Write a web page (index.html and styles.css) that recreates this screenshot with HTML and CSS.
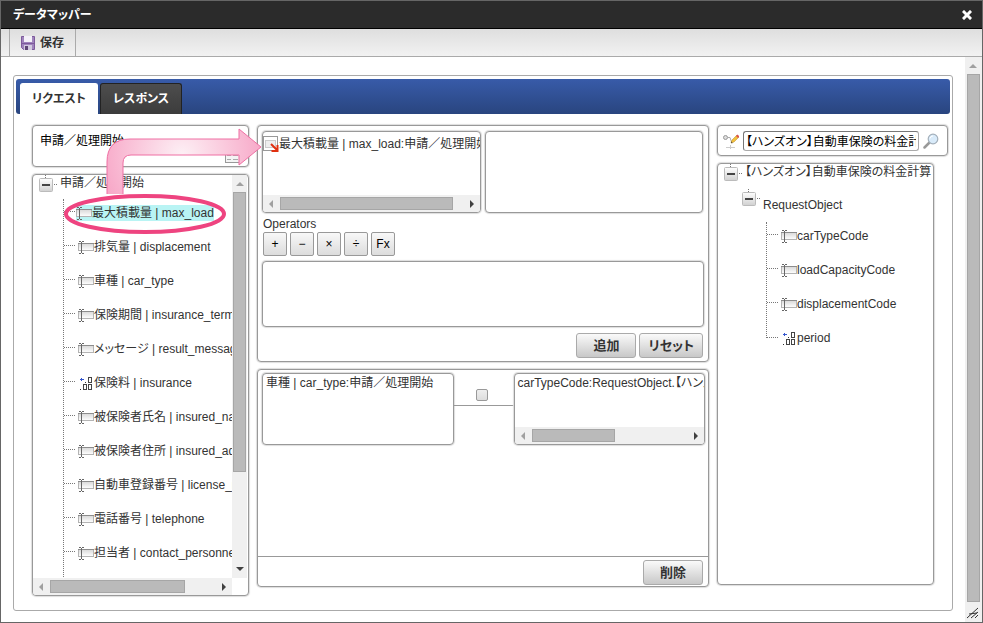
FILE: index.html
```html
<!DOCTYPE html>
<html lang="ja">
<head>
    <meta charset="UTF-8">
    <meta name="viewport" content="width=device-width, initial-scale=1.0">
    <title>データマッパー</title>
    <link rel="stylesheet" href="styles.css">
</head>
<body>
    <!-- Shared icons -->
    <svg class="sprite" aria-hidden="true">
        <defs>
            <linearGradient id="field-fill" x1="0" y1="0" x2="0" y2="1">
                <stop offset="0" stop-color="#d8d8d8"/>
                <stop offset="1" stop-color="#ffffff"/>
            </linearGradient>
            <linearGradient id="minus-fill" x1="0" y1="0" x2="0" y2="1">
                <stop offset="0" stop-color="#ffffff"/>
                <stop offset="1" stop-color="#d0d0d0"/>
            </linearGradient>
        </defs>
        <symbol id="icon-field" viewBox="0 0 16 16">
            <rect x="0.5" y="4.5" width="15" height="7" fill="url(#field-fill)" stroke="#b4b4b4"/>
            <path d="M0 4.5h16" stroke="#8c8c8c"/>
            <path d="M3.5 3v11M1 2.5h2M4 2.5h2M1 14.5h2M4 14.5h2" stroke="#666" fill="none"/>
        </symbol>
        <symbol id="icon-number" viewBox="0 0 16 16">
            <path d="M2 4.5h4M3.5 3v3" stroke="#3355cc" fill="none"/>
            <path d="M7 7h1v1H7zM2 14h1v1H2z" fill="#333"/>
            <rect x="10.5" y="2.5" width="3" height="5" fill="none" stroke="#444"/>
            <rect x="5.5" y="9.5" width="3" height="5" fill="none" stroke="#444"/>
            <rect x="10.5" y="9.5" width="3" height="5" fill="none" stroke="#444"/>
        </symbol>
        <symbol id="icon-minus" viewBox="0 0 20 18">
            <path d="M7.5 0v3M16 9.5h4" stroke="#777" stroke-dasharray="1 1"/>
            <rect x="1.5" y="3.5" width="13" height="13" rx="1" fill="url(#minus-fill)" stroke="#bbb"/>
            <path d="M4 10h8" stroke="#444" stroke-width="2"/>
        </symbol>
        <symbol id="icon-left" viewBox="0 0 8 8"><path d="M6 0v8L2 4z" fill="#a0a0a0"/></symbol>
        <symbol id="icon-right" viewBox="0 0 8 8"><path d="M2 0v8l4-4z" fill="#404040"/></symbol>
        <symbol id="icon-up" viewBox="0 0 8 8"><path d="M0 6h8L4 2z" fill="#a0a0a0"/></symbol>
        <symbol id="icon-down" viewBox="0 0 8 8"><path d="M0 2h8L4 6z" fill="#404040"/></symbol>
    </svg>

    <div class="dialog">
        <div class="title-bar">
            <h1>データマッパー</h1>
            <button class="close-button" aria-label="閉じる">
                <svg width="10" height="10" viewBox="0 0 10 10"><path d="M2 2l6 6M8 2l-6 6" stroke="#fff" stroke-width="3" stroke-linecap="square"/></svg>
            </button>
        </div>

        <div class="toolbar">
            <button class="save-button">
                <svg width="16" height="16" viewBox="0 0 16 16">
                    <path d="M1.5 1.5h13v13h-11l-2-2z" fill="#a084bd" stroke="#7d5a9b"/>
                    <rect x="4" y="1" width="8" height="6" fill="#f4f1f8"/>
                    <path d="M2 8.5h12" stroke="#7d5a9b"/>
                    <rect x="4" y="10" width="8" height="5" fill="#d3cbe0"/>
                    <rect x="5" y="11" width="3" height="4" fill="#5e4676"/>
                </svg>
                保存
            </button>
        </div>

        <div class="content">
            <div class="page">
                <div class="mapper">
                    <div class="tabs">
                        <button class="tab active">リクエスト</button>
                        <button class="tab">レスポンス</button>
                    </div>

                    <div class="columns">
                        <!-- Source side -->
                        <div class="column source">
                            <div class="panel source-name">
                                <span>申請／処理開始</span>
                                <svg class="form-icon" width="15" height="12" viewBox="0 0 15 12">
                                    <rect x="0.5" y="0.5" width="14" height="11" fill="#f4f4f4" stroke="#999"/>
                                    <path d="M2 4.5h4M2 8.5h4M8 4.5h5M8 8.5h5" stroke="#aaa"/>
                                </svg>
                            </div>

                            <div class="panel source-tree">
                                <div class="tree-view">
                                    <div class="tree-root">
                                        <svg width="20" height="18"><use href="#icon-minus"/></svg>
                                        <span>申請／処理開始</span>
                                    </div>
                                    <ul class="tree-items">
                                        <li><span class="node selected"><svg width="16" height="16"><use href="#icon-field"/></svg>最大積載量 | max_load</span></li>
                                        <li><span class="node"><svg width="16" height="16"><use href="#icon-field"/></svg>排気量 | displacement</span></li>
                                        <li><span class="node"><svg width="16" height="16"><use href="#icon-field"/></svg>車種 | car_type</span></li>
                                        <li><span class="node"><svg width="16" height="16"><use href="#icon-field"/></svg>保険期間 | insurance_term</span></li>
                                        <li><span class="node"><svg width="16" height="16"><use href="#icon-field"/></svg>メッセージ | result_message</span></li>
                                        <li><span class="node"><svg width="16" height="16"><use href="#icon-number"/></svg>保険料 | insurance</span></li>
                                        <li><span class="node"><svg width="16" height="16"><use href="#icon-field"/></svg>被保険者氏名 | insured_name</span></li>
                                        <li><span class="node"><svg width="16" height="16"><use href="#icon-field"/></svg>被保険者住所 | insured_address</span></li>
                                        <li><span class="node"><svg width="16" height="16"><use href="#icon-field"/></svg>自動車登録番号 | license_number</span></li>
                                        <li><span class="node"><svg width="16" height="16"><use href="#icon-field"/></svg>電話番号 | telephone</span></li>
                                        <li><span class="node"><svg width="16" height="16"><use href="#icon-field"/></svg>担当者 | contact_personnel</span></li>
                                        <li></li>
                                    </ul>
                                </div>
                                <div class="scroll-v">
                                    <svg width="8" height="8"><use href="#icon-up"/></svg>
                                    <div class="track"><div class="thumb tree-thumb"></div></div>
                                    <svg width="8" height="8"><use href="#icon-down"/></svg>
                                </div>
                                <div class="scroll-h">
                                    <svg width="8" height="8"><use href="#icon-left"/></svg>
                                    <div class="track"><div class="thumb wide-thumb"></div></div>
                                    <svg width="8" height="8"><use href="#icon-right"/></svg>
                                </div>
                            </div>
                        </div>

                        <!-- Mapping editor -->
                        <div class="column mapping">
                            <div class="panel editor">
                                <div class="editor-boxes">
                                    <div class="panel item-box">
                                        <div class="item-text">
                                            <svg width="16" height="16" viewBox="0 0 16 16">
                                                <rect x="0.5" y="0.5" width="14" height="14" fill="#fff" stroke="#999"/>
                                                <rect x="2.5" y="4.5" width="10" height="7" fill="#eee" stroke="#ccc"/>
                                                <path d="M8 8l6 6M14.5 9v6h-6" stroke="#e03010" stroke-width="2" fill="none"/>
                                            </svg>最大積載量 | max_load:申請／処理開始
                                        </div>
                                        <div class="scroll-h">
                                            <svg width="8" height="8"><use href="#icon-left"/></svg>
                                            <div class="track"><div class="thumb item-thumb"></div></div>
                                            <svg width="8" height="8"><use href="#icon-right"/></svg>
                                        </div>
                                    </div>
                                    <div class="panel item-box"></div>
                                </div>
                                <div class="operators-label">Operators</div>
                                <div class="operators">
                                    <button>+</button>
                                    <button>−</button>
                                    <button>×</button>
                                    <button>÷</button>
                                    <button>Fx</button>
                                </div>
                                <div class="panel expression"></div>
                                <div class="actions">
                                    <button class="action-button">追加</button>
                                    <button class="action-button">リセット</button>
                                </div>
                            </div>

                            <div class="panel mappings">
                                <div class="mapping-row">
                                    <div class="panel item-box"><div class="item-text">車種 | car_type:申請／処理開始</div></div>
                                    <div class="link"><input type="checkbox" aria-label="車種 | car_type"></div>
                                    <div class="panel item-box">
                                        <div class="item-text">carTypeCode:RequestObject.【ハンズオン】自動車保険の料金計算</div>
                                        <div class="scroll-h">
                                            <svg width="8" height="8"><use href="#icon-left"/></svg>
                                            <div class="track"><div class="thumb link-thumb"></div></div>
                                            <svg width="8" height="8"><use href="#icon-right"/></svg>
                                        </div>
                                    </div>
                                </div>
                                <div class="mappings-footer">
                                    <button class="action-button">削除</button>
                                </div>
                            </div>
                        </div>

                        <!-- Target side -->
                        <div class="column target">
                            <div class="panel search">
                                <svg width="16" height="16" viewBox="0 0 16 16">
                                    <circle cx="2.5" cy="4.5" r="2" fill="#ddd" stroke="#999"/>
                                    <path d="M5 4.5h2l2 6" stroke="#aaa" fill="none"/>
                                    <path d="M3 14.5h9M7.5 12v4" stroke="#ccc"/>
                                    <path d="M8 10l1-3 5-5 2 2-5 5z" fill="#f2c13c" stroke="#b98b2a" stroke-width="0.5"/>
                                    <path d="M13 3l1.5-1.500 2 2L15 5z" fill="#d9534f"/>
                                    <path d="M8 10l.5-1.500 1 1z" fill="#333"/>
                                </svg>
                                <input type="text" value="【ハンズオン】自動車保険の料金計算" aria-label="フロー名">
                                <button class="search-button" aria-label="検索">
                                    <svg width="16" height="16" viewBox="0 0 16 16">
                                        <path d="M6.5 9.5l-5 5" stroke="#999" stroke-width="2.5" stroke-linecap="round"/>
                                        <circle cx="10" cy="6" r="4.8" fill="#d9ebfa" stroke="#a3afba" stroke-width="1.2"/>
                                        <path d="M7 5.5a3 3 0 0 1 3-2.500" stroke="#fff" fill="none"/>
                                    </svg>
                                </button>
                            </div>

                            <div class="panel target-tree">
                                <div class="tree-root">
                                    <svg width="20" height="18"><use href="#icon-minus"/></svg>
                                    <span>【ハンズオン】自動車保険の料金計算</span>
                                </div>
                                <div class="tree-branch">
                                    <svg width="20" height="18"><use href="#icon-minus"/></svg>
                                    <span>RequestObject</span>
                                </div>
                                <ul class="tree-items">
                                    <li><span class="node"><svg width="16" height="16"><use href="#icon-field"/></svg>carTypeCode</span></li>
                                    <li><span class="node"><svg width="16" height="16"><use href="#icon-field"/></svg>loadCapacityCode</span></li>
                                    <li><span class="node"><svg width="16" height="16"><use href="#icon-field"/></svg>displacementCode</span></li>
                                    <li><span class="node"><svg width="16" height="16"><use href="#icon-number"/></svg>period</span></li>
                                </ul>
                            </div>
                        </div>

                        <!-- Drag guide -->
                        <svg class="guide" width="240" height="120" viewBox="0 0 240 120" aria-hidden="true">
                            <defs>
                                <radialGradient id="arrow-fill" gradientUnits="userSpaceOnUse" cx="150" cy="30" r="85">
                                    <stop offset="0" stop-color="#fdf0f5"/>
                                    <stop offset="1" stop-color="#f7a5c6"/>
                                </radialGradient>
                            </defs>
                            <path d="M75 69V37Q75 14 98 14H207V4L229 22L207 40V30H99Q91 30 91 38V69Z" fill="url(#arrow-fill)"/>
                            <path d="M75 69V37Q75 14 98 14H207V4L229 22L207 40V30H99Q91 30 91 38V69" fill="none" stroke="#ef6fa3"/>
                            <ellipse cx="113" cy="89" rx="79" ry="18" fill="none" stroke="#ee4480" stroke-width="4"/>
                        </svg>
                    </div>
                </div>
            </div>

            <div class="scroll-v page-scroll">
                <svg width="8" height="8"><use href="#icon-up"/></svg>
                <div class="track"><div class="thumb page-thumb"></div></div>
                <svg width="14" height="14" viewBox="0 0 14 14"><path d="M1 12L12 2M5 12l7-6M3 8l8-1M9 12l3-3" stroke="#333" fill="none"/></svg>
            </div>
        </div>
    </div>
</body>
</html>
```
FILE: styles.css
```css
* {
    box-sizing: border-box;
}

body {
    margin: 0;
    font-family: "Liberation Sans", "Noto Sans CJK JP", sans-serif;
    font-size: 12px;
    line-height: 16px;
    color: #333;
    font-feature-settings: "palt";
    background: #fff;
}

button,
input {
    font: inherit;
    color: inherit;
    font-feature-settings: inherit;
}

button {
    padding: 0;
    cursor: pointer;
}

svg {
    display: block;
    flex: none;
}

.sprite {
    position: absolute;
    width: 0;
    height: 0;
}

.dialog {
    display: flex;
    flex-direction: column;
    height: 100vh;
    border: 1px solid #666;
}

.title-bar {
    display: flex;
    align-items: center;
    justify-content: space-between;
    height: 28px;
    padding: 0 10px 0 12px;
    background: #2b2b2b;
    border-bottom: 1px solid #000;
    color: #fff;
}

.title-bar h1 {
    margin: 0;
    font-size: 12px;
}

.close-button {
    border: none;
    background: none;
}

.toolbar {
    display: flex;
    height: 28px;
    padding-left: 8px;
    background: linear-gradient(#dedede, #f2f2f2);
    border-bottom: 1px solid #aaa;
}

.save-button {
    display: flex;
    align-items: center;
    gap: 4px;
    padding: 0 11px 0 10px;
    border: solid #aaa;
    border-width: 0 1px;
    background: none;
    font-weight: bold;
}

.content {
    display: flex;
    flex: 1;
    min-height: 0;
}

.page {
    display: flex;
    flex: 1;
    min-width: 0;
    padding: 18px 12px 11px;
}

.mapper {
    display: flex;
    flex-direction: column;
    flex: 1;
    min-width: 0;
    padding: 3px 2px;
    border: 1px solid #aaa;
    border-radius: 3px;
}

.tabs {
    display: flex;
    gap: 2px;
    height: 35px;
    padding: 4px 4px 0;
    background: linear-gradient(#385ba9, #29457f);
    border-radius: 3px;
}

.tab {
    padding: 0 12px;
    border: 1px solid #222;
    border-bottom: none;
    border-radius: 3px 3px 0 0;
    background: linear-gradient(#4d4d4d, #3c3c3c);
    color: #fff;
    font-weight: bold;
}

.tab.active {
    padding: 0 11px;
    background: #fff;
    border-color: #fff;
    color: #333;
}

.columns {
    position: relative;
    display: grid;
    grid-template-columns: 217fr 452fr 231fr;
    gap: 8px;
    flex: 1;
    min-height: 0;
    padding: 11px 2px 11px 16px;
}

.column {
    display: flex;
    flex-direction: column;
    gap: 7px;
    min-width: 0;
    min-height: 0;
}

.panel {
    min-width: 0;
    border: 1px solid #999;
    border-radius: 4px;
    box-shadow: 0 0 1px 1px #ddd;
    background: #fff;
}

/* Source side */
.source-name {
    display: flex;
    justify-content: space-between;
    height: 42px;
    padding: 7px 8px 3px 7px;
    color: #000;
}

.form-icon {
    align-self: flex-end;
}

.source-tree {
    display: grid;
    grid-template-columns: 1fr 15px;
    grid-template-rows: 1fr 17px;
    flex: 1;
    min-height: 0;
    overflow: hidden;
    padding-right: 1px;
}

.tree-view {
    min-width: 0;
    min-height: 0;
    overflow: hidden;
    white-space: nowrap;
}

.tree-root {
    display: flex;
    gap: 2px;
    padding-left: 5px;
    white-space: nowrap;
}

.tree-items {
    margin: 6px 0 0 30px;
    padding: 0;
    list-style: none;
    border-left: 1px dotted #777;
}

.tree-items li {
    display: flex;
    align-items: center;
    height: 34px;
    padding-bottom: 6px;
}

.tree-items li::before {
    content: "";
    flex: none;
    width: 11px;
    margin-bottom: 4px;
    border-top: 1px dotted #777;
}

.node {
    display: flex;
    flex: none;
    align-items: center;
    height: 16px;
    margin-left: 3px;
    white-space: nowrap;
}

.node.selected {
    margin-left: 1px;
    background: #b9f4f4;
}

/* Scrollbars */
.scroll-h,
.scroll-v {
    display: flex;
    align-items: center;
    background: #f0f0f0;
}

.scroll-h {
    gap: 5px;
    height: 17px;
    padding: 0 4px;
}

.scroll-v {
    flex-direction: column;
    gap: 4px;
    padding: 5px 0;
}

.track {
    flex: 1;
    align-self: stretch;
}

.scroll-v .track {
    width: 13px;
    align-self: center;
}

.thumb {
    background: #bababa;
    border: 1px solid #a6a6a6;
}

.scroll-h .thumb {
    height: 13px;
    margin-top: 2px;
}

.tree-thumb {
    height: 76%;
}

.wide-thumb {
    width: 82%;
}

.item-thumb {
    width: 95%;
}

.link-thumb {
    width: 54%;
}

/* Mapping editor */
.editor {
    padding: 5px 4px 3px;
}

.editor-boxes {
    display: flex;
    gap: 4px;
    padding-right: 1px;
}

.item-box {
    display: flex;
    flex-direction: column;
    justify-content: space-between;
    flex: 1;
    height: 82px;
    overflow: hidden;
}

.item-text {
    display: flex;
    align-items: center;
    padding-top: 4px;
    white-space: nowrap;
}

.operators-label {
    padding: 3px 1px 0;
}

.operators {
    display: flex;
    gap: 3px;
    padding-left: 1px;
}

.operators button {
    width: 24px;
    height: 24px;
    border: 1px solid #999;
    border-radius: 2px;
    background: linear-gradient(#f8f8f8, #dcdcdc);
    color: #000;
}

.expression {
    height: 66px;
    margin-top: 5px;
}

.actions {
    display: flex;
    justify-content: flex-end;
    gap: 3px;
    padding: 6px 1px 0;
}

.action-button {
    min-width: 60px;
    height: 25px;
    padding: 0 8px;
    border: 1px solid #aaa;
    border-radius: 3px;
    background: linear-gradient(#fafafa, #c8c8c8);
    font-size: 13px;
    font-weight: bold;
}

.mappings {
    display: flex;
    flex-direction: column;
    justify-content: space-between;
    flex: 1;
    min-height: 0;
    margin-bottom: 9px;
}

.mapping-row {
    display: flex;
    padding: 3px 3px 0 4px;
}

.mapping-row .item-box {
    height: 72px;
}

.mapping-row .item-text {
    padding: 1px 3px 0;
}

.link {
    width: 60px;
    height: 33px;
    padding-top: 16px;
    border-bottom: 1px solid #999;
}

.link input {
    display: block;
    width: 12px;
    height: 12px;
    margin: 0 26px 0 22px;
    appearance: none;
    border: 1px solid #999;
    border-radius: 2px;
    background: linear-gradient(#eee, #ddd);
}

.mappings-footer {
    display: flex;
    justify-content: flex-end;
    padding: 3px 5px 1px;
    border-top: 1px solid #999;
}

/* Target side */
.search {
    display: flex;
    align-items: center;
    gap: 4px;
    height: 31px;
    padding: 0 8px 0 5px;
}

.search input {
    flex: 1;
    min-width: 0;
    height: 20px;
    padding: 0 2px;
    border: 1px solid #aaa;
    border-top-color: #777;
    border-left-color: #777;
    border-radius: 3px;
    color: #000;
}

.search-button {
    border: none;
    background: none;
}

.target-tree {
    flex: 1;
    min-height: 0;
    margin: 0 14px 11px 0;
    overflow: hidden;
}

.tree-branch {
    display: flex;
    gap: 2px;
    padding: 7px 0 0 23px;
}

.tree-branch span {
    padding-top: 8px;
}

.target-tree .tree-items {
    margin: 9px 0 0 48px;
}

/* the trunk line stops at the last node */
.target-tree .tree-items li:last-child {
    height: 14px;
    padding: 14px 0 0;
    overflow: visible;
    align-items: flex-end;
}

.target-tree .tree-items li:last-child::before {
    margin: 0;
}

.target-tree .tree-items li:last-child .node {
    margin-bottom: -8px;
}

/* Guide drawn over the panels */
.guide {
    position: absolute;
    top: 11px;
    left: 16px;
}

/* Page scrollbar */
.page-scroll {
    width: 17px;
    padding: 5px 1px 2px 0;
}

.page-thumb {
    height: 100%;
}
```
